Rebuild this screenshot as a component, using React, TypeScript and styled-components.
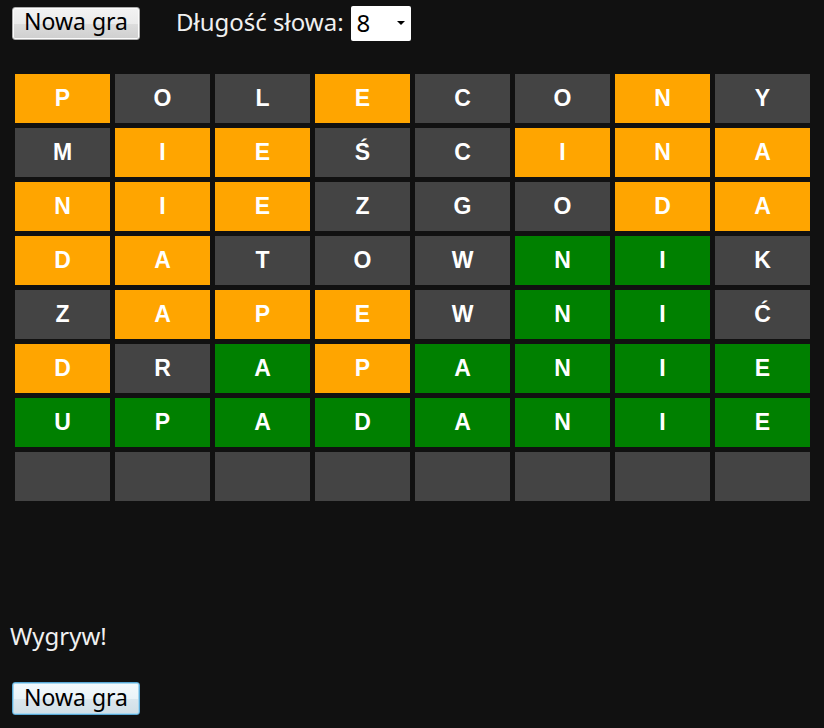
import React from "react";
import styled, { createGlobalStyle } from "styled-components";

const Global = createGlobalStyle`
  html, body { margin: 0; padding: 0; background: #111111; }
  body { font-family: "Noto Sans", "Open Sans", sans-serif; color: #f0f0f0; }
`;

const Page = styled.div`
  display: flex;
  flex-direction: column;
  padding: 6px 0 0 0;
  min-height: 728px;
  box-sizing: border-box;
`;

const TopBar = styled.div`
  display: flex;
  align-items: center;
  height: 34px;
  padding-left: 12px;
`;

const Button = styled.button<{ $focused?: boolean }>`
  font-family: "Noto Sans", "Open Sans", sans-serif;
  font-size: 23px;
  line-height: 1;
  width: 128px;
  height: 33px;
  padding: 0 0 3px 0;
  color: #000;
  border-radius: 3px;
  border: 1px solid ${(p) => (p.$focused ? "#5aa9d6" : "#acacac")};
  box-shadow: ${(p) => (p.$focused ? "inset 0 0 0 1px #a8d8f0" : "inset 0 0 0 1px #fcfcfc")};
  background: ${(p) =>
    p.$focused
      ? "linear-gradient(to bottom, #f4f9fc 0%, #eaf3f8 50%, #dbe7ee 51%, #d0dee6 100%)"
      : "linear-gradient(to bottom, #f3f3f3 0%, #ebebeb 50%, #dddddd 51%, #cfcfcf 100%)"};
`;

const Label = styled.span`
  font-size: 24px;
  margin-left: 36px;
  margin-right: 7px;
  padding-bottom: 3px;
  color: #f0f0f0;
`;

const SelectWrap = styled.span`
  position: relative;
  display: inline-flex;
  width: 60px;
  height: 35px;
`;

const Select = styled.select`
  appearance: none;
  -webkit-appearance: none;
  width: 60px;
  height: 35px;
  border: none;
  border-radius: 2px;
  background: #fff;
  color: #000;
  font-family: "Noto Sans", "Open Sans", sans-serif;
  font-size: 24px;
  padding: 0 0 3px 6px;
  outline: none;
`;

const Arrow = styled.span`
  position: absolute;
  right: 6px;
  top: 15px;
  width: 0;
  height: 0;
  border-left: 4px solid transparent;
  border-right: 4px solid transparent;
  border-top: 4px solid #000;
  pointer-events: none;
`;

const Board = styled.div`
  display: grid;
  grid-template-columns: repeat(8, 95px);
  grid-auto-rows: 49px;
  gap: 5px;
  margin: 34px 0 0 15px;
`;

const colors: Record<string, string> = {
  o: "#ffa500",
  g: "#444444",
  v: "#008000",
};

const Tile = styled.div<{ $state: string }>`
  background: ${(p) => colors[p.$state]};
  display: flex;
  align-items: center;
  justify-content: center;
  font-family: "Liberation Sans", Arial, sans-serif;
  font-weight: bold;
  font-size: 23px;
  color: #ffffff;
`;

const Status = styled.div`
  font-size: 24px;
  line-height: 28px;
  margin: 121px 0 0 10px;
  color: #f0f0f0;
`;

const BottomRow = styled.div`
  margin: 32px 0 0 12px;
`;

const rows: [string, string][] = [
  ["POLECONY", "oggoggog"],
  ["MIEŚCINA", "googgooo"],
  ["NIEZGODA", "ooogggoo"],
  ["DATOWNIK", "oogggvvg"],
  ["ZAPEWNIĆ", "gooogvvg"],
  ["DRAPANIE", "ogvovvvv"],
  ["UPADANIE", "vvvvvvvv"],
  ["        ", "gggggggg"],
];

export default function App() {
  return (
    <Page>
      <Global />
      <TopBar>
        <Button>Nowa gra</Button>
        <Label>Długość słowa:</Label>
        <SelectWrap>
          <Select defaultValue="8">
            {[4, 5, 6, 7, 8, 9, 10].map((n) => (
              <option key={n} value={n}>
                {n}
              </option>
            ))}
          </Select>
          <Arrow />
        </SelectWrap>
      </TopBar>
      <Board>
        {rows.map(([word, states], r) =>
          Array.from(word).map((ch, c) => (
            <Tile key={`${r}-${c}`} $state={states[c]}>
              {ch.trim()}
            </Tile>
          ))
        )}
      </Board>
      <Status>Wygryw!</Status>
      <BottomRow>
        <Button $focused>Nowa gra</Button>
      </BottomRow>
    </Page>
  );
}
